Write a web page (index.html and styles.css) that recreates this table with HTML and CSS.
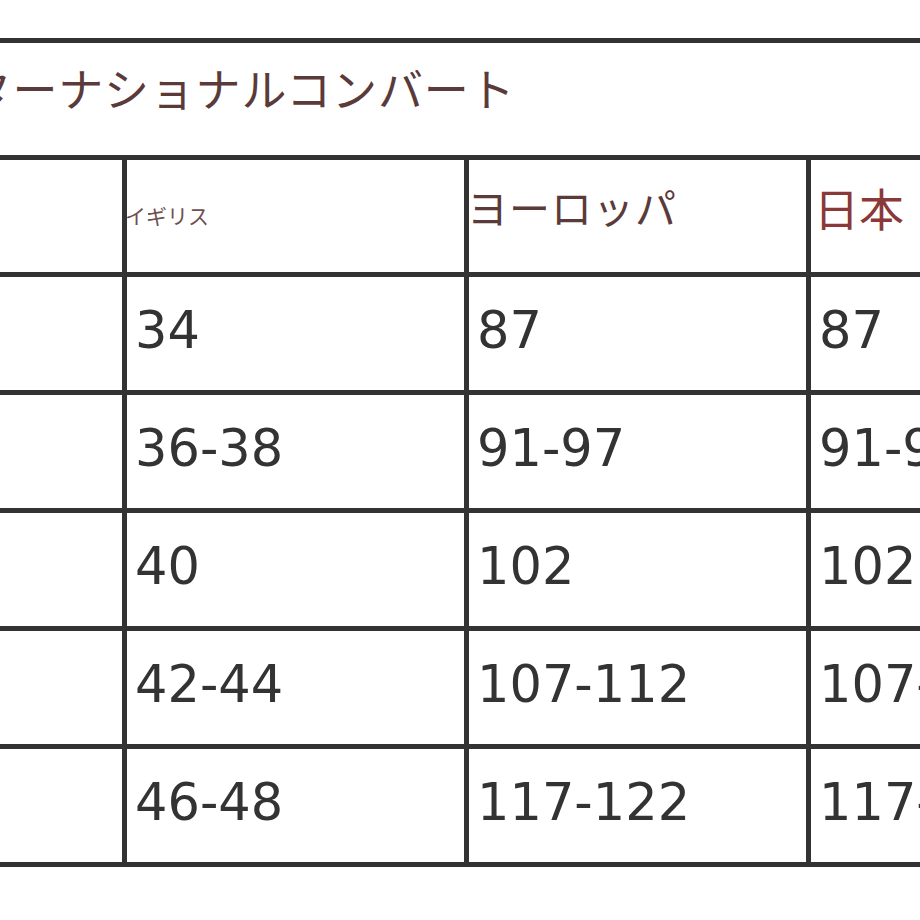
FILE: index.html
```html
<!DOCTYPE html>
<html lang="ja">
<head>
<meta charset="utf-8">
<title>インターナショナルコンバート</title>
<link rel="stylesheet" href="styles.css">
</head>
<body>
<div class="viewport">
  <table class="size-table">
    <colgroup>
      <col class="col"><col class="col"><col class="col"><col class="col">
    </colgroup>
    <tr class="row-title">
      <td class="title" colspan="4">インターナショナルコンバート</td>
    </tr>
    <tr class="row-head">
      <td class="head"></td>
      <td class="head head-uk">イギリス</td>
      <td class="head head-eu">ヨーロッパ</td>
      <td class="head head-jp">日本</td>
    </tr>
    <tr class="row-data"><td class="num"></td><td class="num">34</td><td class="num">87</td><td class="num">87</td></tr>
    <tr class="row-data"><td class="num"></td><td class="num">36-38</td><td class="num">91-97</td><td class="num">91-97</td></tr>
    <tr class="row-data"><td class="num"></td><td class="num">40</td><td class="num">102</td><td class="num">102</td></tr>
    <tr class="row-data"><td class="num"></td><td class="num">42-44</td><td class="num">107-112</td><td class="num">107-112</td></tr>
    <tr class="row-data"><td class="num"></td><td class="num">46-48</td><td class="num">117-122</td><td class="num">117-122</td></tr>
  </table>
</div>
</body>
</html>
```

FILE: styles.css
```css
html, body {
  margin: 0;
  padding: 0;
  background: #ffffff;
}

.viewport {
  width: 920px;
  height: 920px;
  overflow: hidden;
  background: #ffffff;
}

.size-table {
  border-collapse: collapse;
  table-layout: fixed;
  width: 1368px;
  margin-top: 38px;
  margin-left: -220px;
}

.col {
  width: 342px;
}

.size-table td {
  border: 5px solid #333333;
  padding: 0;
  vertical-align: middle;
  white-space: nowrap;
  overflow: hidden;
}

.row-title {
  height: 117px;
}

.row-head {
  height: 117px;
}

.row-data {
  height: 118px;
}

.size-table .title {
  font-family: "Noto Sans CJK JP", sans-serif;
  font-size: 45px;
  letter-spacing: 0.8px;
  color: #5b3a3a;
  padding-left: 90px;
  padding-bottom: 24px;
  text-align: left;
  line-height: 1;
}

.size-table .head {
  font-family: "Noto Sans CJK JP", sans-serif;
  line-height: 1;
}

.size-table .head-uk {
  font-size: 21px;
  color: #6e5050;
  text-indent: -2px;
  padding-bottom: 2px;
}

.size-table .head-eu {
  font-size: 41px;
  letter-spacing: 1px;
  color: #5b3a3a;
  text-indent: -2px;
  padding-bottom: 20px;
}

.size-table .head-jp {
  font-size: 45px;
  color: #8a3838;
  padding-left: 3px;
  padding-bottom: 18px;
}

.size-table .num {
  font-family: "DejaVu Sans", Verdana, sans-serif;
  font-size: 51px;
  color: #333333;
  padding-left: 8px;
  padding-bottom: 6px;
  line-height: 1;
}
```
